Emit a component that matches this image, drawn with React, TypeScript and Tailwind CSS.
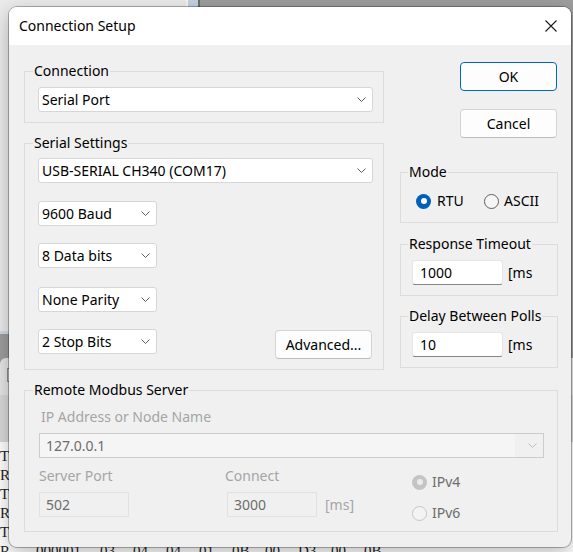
import React from 'react';

function Chevron({ color = '#5c5c5c' }: { color?: string }) {
  return (
    <svg width="9" height="5" viewBox="0 0 9 5" className="shrink-0">
      <path d="M0.5 0.5 L4.5 4.5 L8.5 0.5" fill="none" stroke={color} strokeWidth="1" />
    </svg>
  );
}

function Combo({ value, className }: { value: string; className: string }) {
  return (
    <div className={`flex h-[25px] items-center justify-between rounded-[3px] border border-[#d6d6d6] bg-white pl-[3px] pr-[6px] ${className}`}>
      <span className="leading-[20px]">{value}</span>
      <Chevron />
    </div>
  );
}

function Edit({ value, disabled }: { value: string; disabled?: boolean }) {
  return disabled ? (
    <div className="flex h-[25px] w-[90px] items-center border border-[#e2e2e2] bg-[#f0f0f0] pl-[6px] text-[#6d6d6d]">
      {value}
    </div>
  ) : (
    <div className="flex h-[25px] w-[91px] items-center rounded-[3px] border border-[#e5e5e5] border-b-[#868686] bg-white pl-[7px]">
      {value}
    </div>
  );
}

function Radio({ checked, disabled }: { checked?: boolean; disabled?: boolean }) {
  if (checked) {
    return (
      <span className={`flex h-[15px] w-[15px] shrink-0 items-center justify-center rounded-full ${disabled ? 'bg-[#c4c4c4]' : 'bg-[#005fb8]'}`}>
        <span className={`h-[6px] w-[6px] rounded-full ${disabled ? 'bg-[#ececec]' : 'bg-white'}`} />
      </span>
    );
  }
  return (
    <span className={`h-[15px] w-[15px] shrink-0 rounded-full border ${disabled ? 'border-[#c6c6c6] bg-[#f3f3f3]' : 'border-[#5f5f5f] bg-[#f6f6f6]'}`} />
  );
}

function Group({ title, className, legendClass, children }: { title: string; className: string; legendClass: string; children: React.ReactNode }) {
  return (
    <fieldset className={`border border-[#dcdcdc] ${className}`}>
      <legend className={`px-[1px] leading-[20px] ${legendClass}`}>{title}</legend>
      {children}
    </fieldset>
  );
}

function Button({ label, primary, className }: { label: string; primary?: boolean; className: string }) {
  return (
    <div
      className={`flex h-[29px] w-[97px] items-center justify-center rounded-[4px] border bg-[#fdfdfd] ${
        primary ? 'border-[#0067c0]' : 'border-[#d4d4d4] border-b-[#bdbdbd]'
      } ${className}`}
    >
      {label}
    </div>
  );
}

export default function App() {
  return (
    <div className="relative h-[552px] w-[573px] overflow-hidden bg-[#9e9e9e] font-['Noto_Sans',sans-serif] text-[14px] leading-[20px] text-black">
      {/* windows behind the dialog */}
      <div className="absolute left-0 top-0 flex h-[334px] w-[200px] border-b-[3px] border-[#d2dae2] bg-[#ebebeb]">
        <div className="w-[186px]" />
        <div className="w-[2px] bg-[#f6f6f6]" />
        <div className="w-[10px] bg-[#c5d2df]" />
        <div className="w-[2px] bg-[#6e6e6e]" />
      </div>
      <div className="absolute left-0 top-[358px] flex h-[194px] w-[573px] flex-col overflow-hidden rounded-tl-[6px] bg-[#e6e6e6]">
        <div className="h-[37px] shrink-0 pl-[7px] pt-[10px]">
          <div className="h-[14px] w-[6px] border border-[#8c8c8c]" />
        </div>
        <div className="h-[47px] shrink-0 bg-[#d9d9d9]" />
        <div className="flex-1 bg-white pt-[5px] font-['Liberation_Serif',serif] text-[15px] leading-[19px] text-[#1c1c1c]">
          <div>T</div>
          <div>R</div>
          <div>T</div>
          <div>R</div>
          <div>T</div>
          <div className="flex">
            <span className="w-[36px]">R</span>
            <span className="w-[64px]">000001</span>
            {['03', '04', '04', '01', '0B', '00', 'D3', '00', '0B'].map((b, i) => (
              <span key={i} className="w-[33px]">{b}</span>
            ))}
          </div>
        </div>
      </div>

      {/* dialog */}
      <div className="absolute left-[9px] top-[7px] w-[562px] overflow-hidden rounded-[8px] bg-[#f0f0f0] shadow-[0_0_0_1px_rgba(0,0,0,0.28),0_6px_20px_rgba(0,0,0,0.28)]">
        <div className="flex h-[38px] items-center justify-between bg-white pl-[10px] pr-[14px]">
          <span>Connection Setup</span>
          <svg width="12" height="12" viewBox="0 0 12 12">
            <path d="M0.5 0.5 L11.5 11.5 M11.5 0.5 L0.5 11.5" stroke="#1a1a1a" strokeWidth="1.1" fill="none" />
          </svg>
        </div>

        <div className="pb-[15px] pl-[15px] pt-[16px]">
          <div className="flex">
            {/* left column */}
            <div className="w-[360px]">
              <Group title="Connection" className="w-[360px]" legendClass="ml-[8px]">
                <div className="pb-[10px] pl-[13px] pr-[10px] pt-[6px]">
                  <Combo value="Serial Port" className="w-[335px]" />
                </div>
              </Group>
              <Group title="Serial Settings" className="mt-[10px] w-[360px]" legendClass="ml-[8px]">
                <div className="pb-[10px] pl-[13px] pr-[10px] pt-[5px]">
                  <Combo value="USB-SERIAL CH340 (COM17)" className="w-[335px]" />
                  <Combo value="9600 Baud" className="mt-[18px] w-[119px]" />
                  <Combo value="8 Data bits" className="mt-[17px] w-[119px]" />
                  <Combo value="None Parity" className="mt-[19px] w-[119px]" />
                  <div className="mt-[17px] flex items-start">
                    <Combo value="2 Stop Bits" className="w-[119px]" />
                    <Button label="Advanced..." className="ml-auto mr-[1px] mt-[1px]" />
                  </div>
                </div>
              </Group>
            </div>

            {/* right column */}
            <div className="ml-[16px] w-[158px]">
              <Button label="OK" primary className="ml-[60px] mt-[1px]" />
              <Button label="Cancel" className="ml-[60px] mt-[18px]" />
              <Group title="Mode" className="mt-[24px] w-[158px]" legendClass="ml-[7px]">
                <div className="flex pb-[11px] pl-[15px] pt-[9px]">
                  <div className="flex w-[68px] items-center gap-[6px]">
                    <Radio checked />
                    <span>RTU</span>
                  </div>
                  <div className="flex items-center gap-[5px]">
                    <Radio />
                    <span>ASCII</span>
                  </div>
                </div>
              </Group>
              <Group title="Response Timeout" className="mt-[11px] w-[158px]" legendClass="ml-[7px]">
                <div className="flex items-center pb-[10px] pl-[11px] pt-[6px]">
                  <Edit value="1000" />
                  <span className="ml-[5px] w-[40px] overflow-hidden whitespace-nowrap">[ms</span>
                </div>
              </Group>
              <Group title="Delay Between Polls" className="mt-[10px] w-[158px]" legendClass="ml-[7px]">
                <div className="flex items-center pb-[10px] pl-[11px] pt-[6px]">
                  <Edit value="10" />
                  <span className="ml-[5px] w-[40px] overflow-hidden whitespace-nowrap">[ms</span>
                </div>
              </Group>
            </div>
          </div>

          <Group title="Remote Modbus Server" className="mt-[10px] w-[534px]" legendClass="ml-[8px]">
            <div className="pb-[14px] pl-[14px] pt-[7px]">
              <div className="pl-[2px] text-[#a5a5a5]">IP Address or Node Name</div>
              <div className="mt-[6px] flex h-[25px] w-[505px] items-center border border-[#cccccc] bg-[#f0f0f0] pr-[6px]">
                <div className="flex h-full flex-1 items-center bg-[#f5f5f5] pl-[6px] text-[#6d6d6d]">127.0.0.1</div>
                <div className="flex w-[22px] justify-end">
                  <Chevron color="#bdbdbd" />
                </div>
              </div>
              <div className="mt-[8px] flex h-[51px]">
                <div className="w-[188px]">
                  <div className="text-[#a5a5a5]">Server Port</div>
                  <div className="mt-[6px]">
                    <Edit value="502" disabled />
                  </div>
                </div>
                <div className="w-[185px]">
                  <div className="-ml-[2px] text-[#a5a5a5]">Connect</div>
                  <div className="mt-[6px] flex items-center">
                    <Edit value="3000" disabled />
                    <span className="ml-[8px] whitespace-nowrap text-[#a5a5a5]">[ms]</span>
                  </div>
                </div>
                <div className="pt-[6px]">
                  <div className="flex items-center gap-[5px] text-[#6d6d6d]">
                    <Radio checked disabled />
                    <span>IPv4</span>
                  </div>
                  <div className="mt-[11px] flex items-center gap-[5px] text-[#6d6d6d]">
                    <Radio disabled />
                    <span>IPv6</span>
                  </div>
                </div>
              </div>
            </div>
          </Group>
        </div>
      </div>
    </div>
  );
}
